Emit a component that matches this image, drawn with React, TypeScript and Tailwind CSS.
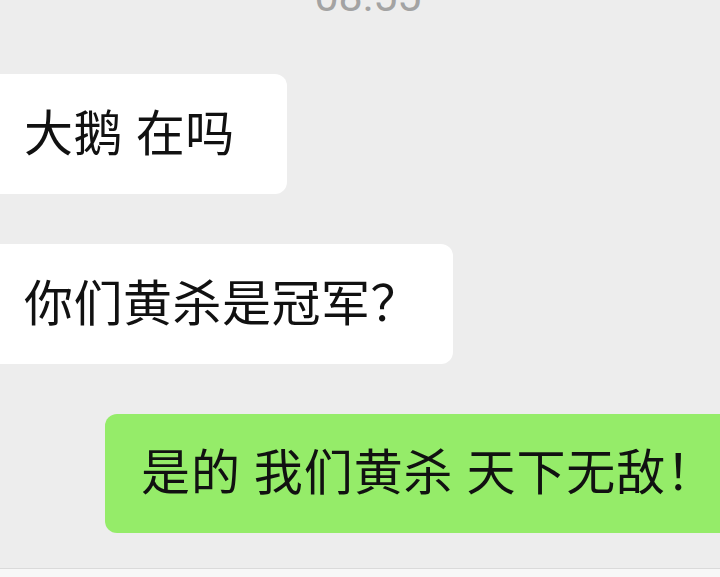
import React from 'react';

const font = { fontFamily: 'Roboto, "Noto Sans CJK SC", sans-serif' };

function Bubble({ text, mine, pr }: { text: string; mine?: boolean; pr?: string }) {
  if (mine) {
    return (
      <div className="ml-[105px] h-[119px] flex items-center rounded-l-[12px] bg-[#95ec69] pl-[36px]">
        <span className="text-[49px] leading-none tracking-[0.9px] whitespace-nowrap text-[#111]">{text}</span>
      </div>
    );
  }
  return (
    <div className={`self-start h-[120px] flex items-center rounded-r-[12px] bg-white pl-[24px] ${pr}`}>
      <span className="text-[49px] leading-none tracking-[0.5px] whitespace-nowrap text-[#111]">{text}</span>
    </div>
  );
}

export default function App() {
  return (
    <div style={font} className="w-[720px] h-[577px] bg-[#ededed] overflow-hidden flex flex-col">
      <div className="-mt-[25px] h-[42px] text-center text-[43px] leading-[42px] text-[#a3a3a3] pl-[16px]">08:55</div>
      <div className="mt-[57px] flex flex-col gap-[50px]">
        <Bubble text="大鹅 在吗" pr="pr-[52px]" />
        <Bubble text="你们黄杀是冠军？" pr="pr-[33px]" />
        <Bubble text="是的 我们黄杀 天下无敌！" mine />
      </div>
      <div className="mt-auto h-[9px] border-t border-[#dadada] bg-[#f7f7f7]" />
    </div>
  );
}
